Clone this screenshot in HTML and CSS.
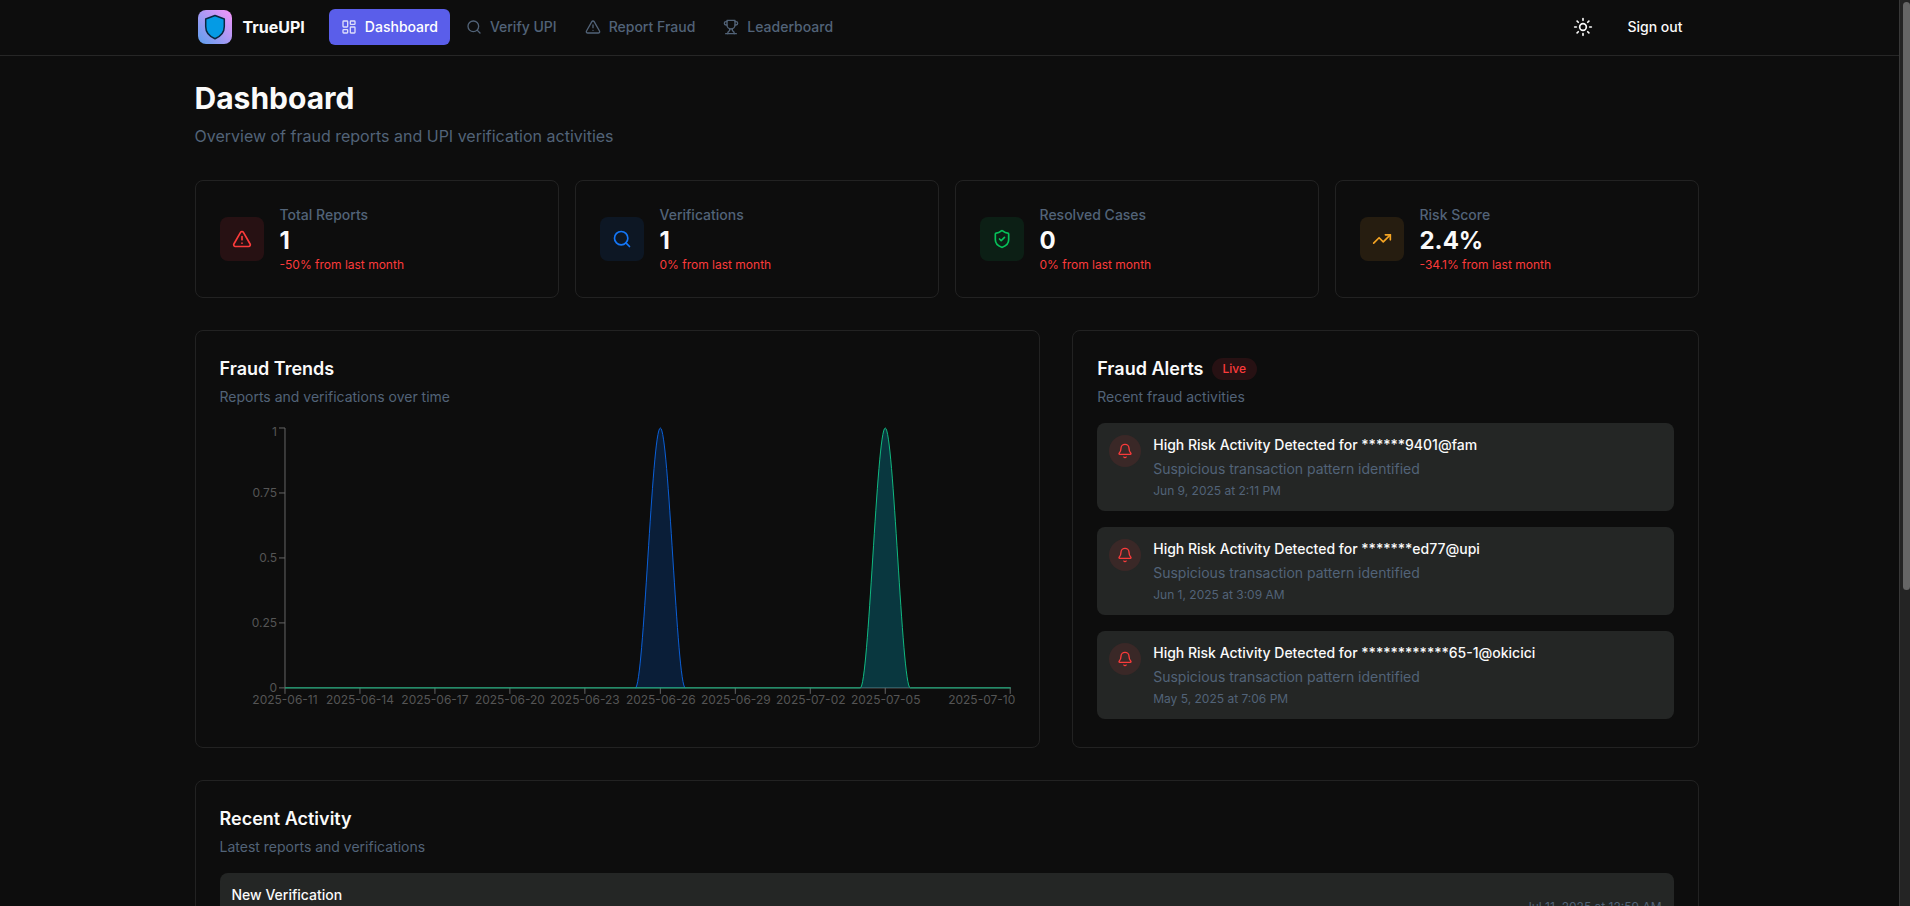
FILE: index.html
```html
<!DOCTYPE html>
<html lang="en">

<head>
    <meta charset="utf-8">
    <meta name="viewport" content="width=device-width, initial-scale=1">
    <title>TrueUPI - Dashboard</title>
    <link rel="stylesheet" href="styles.css">
</head>

<body>
    <!-- shared icons -->
    <svg class="sprite" aria-hidden="true">
        <symbol id="icon-search" viewBox="0 0 24 24">
            <circle cx="11" cy="11" r="8" />
            <path d="m21 21-4.3-4.3" />
        </symbol>
        <symbol id="icon-alert" viewBox="0 0 24 24">
            <path d="m21.73 18-8-14a2 2 0 0 0-3.48 0l-8 14A2 2 0 0 0 4 21h16a2 2 0 0 0 1.73-3" />
            <path d="M12 9v4" />
            <path d="M12 17h.01" />
        </symbol>
        <symbol id="icon-bell" viewBox="0 0 24 24">
            <path d="M10.268 21a2 2 0 0 0 3.464 0" />
            <path d="M3.262 15.326A1 1 0 0 0 4 17h16a1 1 0 0 0 .74-1.673C19.41 13.956 18 12.499 18 8A6 6 0 0 0 6 8c0 4.499-1.411 5.956-2.738 7.326" />
        </symbol>
    </svg>

    <div class="page">
        <header class="header">
            <div class="container header-inner">
                <a href="#" class="brand">
                    <svg class="logo" viewBox="0 0 34 34" aria-hidden="true">
                        <defs>
                            <linearGradient id="logo-bg" x1="0" y1="1" x2="1" y2="0">
                                <stop offset="0" stop-color="#5b9fee" />
                                <stop offset="1" stop-color="#f794fa" />
                            </linearGradient>
                        </defs>
                        <rect width="34" height="34" rx="8" fill="url(#logo-bg)" />
                        <path d="M17 5.5 L26.3 9 V16.5 C26.3 22 22.5 26.5 17 28.7 C11.5 26.5 7.7 22 7.7 16.5 V9 Z" fill="#049be5" stroke="#0b2740" stroke-width="1.5" stroke-linejoin="round" />
                    </svg>
                    TrueUPI
                </a>
                <nav class="nav">
                    <a href="#" class="nav-link active">
                        <svg class="icon" viewBox="0 0 24 24">
                            <rect width="7" height="9" x="3" y="3" rx="1" />
                            <rect width="7" height="5" x="14" y="3" rx="1" />
                            <rect width="7" height="9" x="14" y="12" rx="1" />
                            <rect width="7" height="5" x="3" y="16" rx="1" />
                        </svg>
                        Dashboard
                    </a>
                    <a href="#" class="nav-link">
                        <svg class="icon"><use href="#icon-search" /></svg>
                        Verify UPI
                    </a>
                    <a href="#" class="nav-link">
                        <svg class="icon"><use href="#icon-alert" /></svg>
                        Report Fraud
                    </a>
                    <a href="#" class="nav-link">
                        <svg class="icon" viewBox="0 0 24 24">
                            <path d="M6 9H4.5a2.5 2.5 0 0 1 0-5H6" />
                            <path d="M18 9h1.5a2.5 2.5 0 0 0 0-5H18" />
                            <path d="M4 22h16" />
                            <path d="M10 14.66V17c0 .55-.47.98-.97 1.21C7.85 18.75 7 20.24 7 22" />
                            <path d="M14 14.66V17c0 .55.47.98.97 1.21C16.15 18.75 17 20.24 17 22" />
                            <path d="M18 2H6v7a6 6 0 0 0 12 0V2Z" />
                        </svg>
                        Leaderboard
                    </a>
                </nav>
                <div class="actions">
                    <button type="button" class="btn btn-icon" aria-label="Toggle theme">
                        <svg class="icon icon-md" viewBox="0 0 24 24">
                            <circle cx="12" cy="12" r="4" />
                            <path d="M12 2v2" />
                            <path d="M12 20v2" />
                            <path d="m4.93 4.93 1.41 1.41" />
                            <path d="m17.66 17.66 1.41 1.41" />
                            <path d="M2 12h2" />
                            <path d="M20 12h2" />
                            <path d="m6.34 17.66-1.41 1.41" />
                            <path d="m19.07 4.93-1.41 1.41" />
                        </svg>
                    </button>
                    <button type="button" class="btn">Sign out</button>
                </div>
            </div>
        </header>

        <main class="container main">
            <h1>Dashboard</h1>
            <p class="lead">Overview of fraud reports and UPI verification activities</p>

            <section class="stats">
                <div class="card stat">
                    <div class="stat-icon red">
                        <svg class="icon icon-md"><use href="#icon-alert" /></svg>
                    </div>
                    <div>
                        <p class="stat-label">Total Reports</p>
                        <p class="stat-value">1</p>
                        <p class="stat-change">-50% from last month</p>
                    </div>
                </div>
                <div class="card stat">
                    <div class="stat-icon blue">
                        <svg class="icon icon-md"><use href="#icon-search" /></svg>
                    </div>
                    <div>
                        <p class="stat-label">Verifications</p>
                        <p class="stat-value">1</p>
                        <p class="stat-change">0% from last month</p>
                    </div>
                </div>
                <div class="card stat">
                    <div class="stat-icon green">
                        <svg class="icon icon-md" viewBox="0 0 24 24">
                            <path d="M20 13c0 5-3.5 7.5-7.66 8.95a1 1 0 0 1-.67-.01C7.5 20.5 4 18 4 13V6a1 1 0 0 1 1-1c2 0 4.5-1.2 6.24-2.72a1.17 1.17 0 0 1 1.52 0C14.51 3.81 17 5 19 5a1 1 0 0 1 1 1z" />
                            <path d="m9 12 2 2 4-4" />
                        </svg>
                    </div>
                    <div>
                        <p class="stat-label">Resolved Cases</p>
                        <p class="stat-value">0</p>
                        <p class="stat-change">0% from last month</p>
                    </div>
                </div>
                <div class="card stat">
                    <div class="stat-icon amber">
                        <svg class="icon icon-md" viewBox="0 0 24 24">
                            <path d="M22 7 13.5 15.5l-5-5L2 17" />
                            <path d="M16 7h6v6" />
                        </svg>
                    </div>
                    <div>
                        <p class="stat-label">Risk Score</p>
                        <p class="stat-value">2.4%</p>
                        <p class="stat-change">-34.1% from last month</p>
                    </div>
                </div>
            </section>

            <div class="panels">
                <section class="card trends">
                    <h2>Fraud Trends</h2>
                    <p class="card-sub">Reports and verifications over time</p>
                    <svg class="chart" viewBox="0 0 796 300" role="img" aria-label="Reports and verifications over time">
                        <!-- axes -->
                        <g class="axis">
                            <path d="M65 5V265M65 265H791" />
                            <path d="M59 5h6M59 70h6M59 135h6M59 200h6M59 265h6" />
                            <path d="M65 265v6M140 265v6M215 265v6M290 265v6M365 265v6M440.5 265v6M515.5 265v6M590.5 265v6M665.5 265v6M790.5 265v6" />
                        </g>
                        <g class="labels labels-y">
                            <text x="57" y="13">1</text>
                            <text x="57" y="74">0.75</text>
                            <text x="57" y="139">0.5</text>
                            <text x="57" y="204">0.25</text>
                            <text x="57" y="269">0</text>
                        </g>
                        <g class="labels labels-x">
                            <text x="65" y="281">2025-06-11</text>
                            <text x="140" y="281">2025-06-14</text>
                            <text x="215" y="281">2025-06-17</text>
                            <text x="290" y="281">2025-06-20</text>
                            <text x="365" y="281">2025-06-23</text>
                            <text x="441" y="281">2025-06-26</text>
                            <text x="516" y="281">2025-06-29</text>
                            <text x="591" y="281">2025-07-02</text>
                            <text x="666" y="281">2025-07-05</text>
                            <text x="762" y="281">2025-07-10</text>
                        </g>
                        <!-- reports, then verifications -->
                        <path class="reports" d="M415.5 265C424 265 432 5 440.5 5S457 265 465.5 265" />
                        <path class="verifications" d="M65 265H640.5C649 265 657 5 665.5 5S682 265 690.5 265H791" />
                    </svg>
                </section>

                <section class="card alerts">
                    <div class="card-head">
                        <h2>Fraud Alerts</h2>
                        <span class="badge">Live</span>
                    </div>
                    <p class="card-sub">Recent fraud activities</p>
                    <ul class="list">
                        <li class="alert">
                            <span class="alert-icon"><svg class="icon"><use href="#icon-bell" /></svg></span>
                            <div>
                                <p class="item-title">High Risk Activity Detected for ******9401@fam</p>
                                <p class="item-text">Suspicious transaction pattern identified</p>
                                <p class="item-date">Jun 9, 2025 at 2:11 PM</p>
                            </div>
                        </li>
                        <li class="alert">
                            <span class="alert-icon"><svg class="icon"><use href="#icon-bell" /></svg></span>
                            <div>
                                <p class="item-title">High Risk Activity Detected for *******ed77@upi</p>
                                <p class="item-text">Suspicious transaction pattern identified</p>
                                <p class="item-date">Jun 1, 2025 at 3:09 AM</p>
                            </div>
                        </li>
                        <li class="alert">
                            <span class="alert-icon"><svg class="icon"><use href="#icon-bell" /></svg></span>
                            <div>
                                <p class="item-title">High Risk Activity Detected for ************65-1@okicici</p>
                                <p class="item-text">Suspicious transaction pattern identified</p>
                                <p class="item-date">May 5, 2025 at 7:06 PM</p>
                            </div>
                        </li>
                    </ul>
                </section>
            </div>

            <section class="card">
                <h2>Recent Activity</h2>
                <p class="card-sub">Latest reports and verifications</p>
                <ul class="list">
                    <li class="activity">
                        <p class="item-title">New Verification</p>
                        <time class="activity-date" datetime="2025-07-11T00:59">Jul 11, 2025 at 12:59 AM</time>
                    </li>
                </ul>
            </section>
        </main>
    </div>

    <div class="scrollbar" aria-hidden="true">
        <div class="scrollbar-thumb"></div>
    </div>
</body>

</html>
```
FILE: styles.css
```css
:root {
    --bg: #0d0d0d;
    --border: #222222;
    --text: #fafafa;
    --muted: #526378;
    --item: #242625;
    --primary: #5a5eea;
    --red: #fb3b3b;
}

* {
    box-sizing: border-box;
}

body {
    display: flex;
    height: 100vh;
    margin: 0;
    overflow: hidden;
    background: var(--bg);
    color: var(--text);
    font-family: Inter, "Liberation Sans", sans-serif;
    font-size: 14px;
    line-height: 20px;
}

h1,
h2,
p,
ul {
    margin: 0;
    padding: 0;
}

ul {
    list-style: none;
}

a {
    color: inherit;
    text-decoration: none;
}

.sprite {
    display: none;
}

.page {
    flex: 1;
    min-width: 0;
    overflow: hidden;
}

.container {
    max-width: 1542px;
    margin: 0 auto;
    padding: 0 22px 0 16px;
}

.icon {
    flex: none;
    width: 16px;
    height: 16px;
    fill: none;
    stroke: currentColor;
    stroke-width: 2;
    stroke-linecap: round;
    stroke-linejoin: round;
}

.icon-md {
    width: 20px;
    height: 20px;
}

/* Header */
.header {
    padding-bottom: 1px;
    border-bottom: 1px solid #262626;
}

.header-inner {
    display: flex;
    align-items: center;
    height: 54px;
}

.brand {
    display: flex;
    align-items: center;
    gap: 11px;
    padding: 0 24px 0 3px;
    font-size: 16px;
    font-weight: 700;
    line-height: 24px;
}

.logo {
    width: 34px;
    height: 34px;
}

.nav {
    display: flex;
    gap: 4px;
}

.nav-link {
    display: flex;
    align-items: center;
    gap: 8px;
    height: 36px;
    padding: 0 12px;
    border-radius: 6px;
    color: var(--muted);
    font-weight: 500;
}

.nav-link.active {
    background: var(--primary);
    color: #fff;
}

.nav-link.active .icon {
    opacity: 0.8;
}

.actions {
    display: flex;
    align-items: center;
    gap: 8px;
    margin-left: auto;
}

.btn {
    height: 36px;
    padding: 0 16px;
    border: none;
    border-radius: 6px;
    background: none;
    color: var(--text);
    font: inherit;
    font-weight: 500;
    cursor: pointer;
}

.btn-icon {
    display: flex;
    align-items: center;
    justify-content: center;
    width: 40px;
    padding: 0;
}

.btn:hover {
    background: var(--item);
}

/* Content */
.main {
    padding-top: 24px;
}

h1 {
    font-size: 30px;
    font-weight: 700;
    line-height: 36px;
}

h2 {
    font-size: 18px;
    font-weight: 600;
    line-height: 28px;
}

.lead {
    margin: 8px 0 32px;
    color: var(--muted);
    font-size: 16px;
    line-height: 24px;
}

.card {
    padding: 24px;
    border: 1px solid var(--border);
    border-radius: 8px;
}

.card-head {
    display: flex;
    align-items: center;
    gap: 8px;
}

.card-sub {
    margin: 4px 0 16px;
    color: var(--muted);
}

.badge {
    padding: 3px 11px;
    border-radius: 11px;
    background: #271113;
    color: var(--red);
    font-size: 12px;
    font-weight: 500;
    line-height: 16px;
}

/* Stat cards */
.stats {
    display: grid;
    grid-template-columns: repeat(4, 1fr);
    gap: 16px;
    margin-bottom: 32px;
}

.stat {
    display: flex;
    align-items: center;
    gap: 16px;
}

.stat-icon {
    display: flex;
    padding: 12px;
    border-radius: 8px;
}

.stat-icon.red {
    background: #271113;
    color: var(--red);
}

.stat-icon.blue {
    background: #0d1724;
    color: #1477f8;
}

.stat-icon.green {
    background: #0c1f15;
    color: #06c159;
}

.stat-icon.amber {
    background: #261d10;
    color: #f5a524;
}

.stat-label {
    color: var(--muted);
    font-weight: 500;
}

.stat-value {
    font-size: 24px;
    font-weight: 700;
    line-height: 32px;
}

.stat-change {
    color: var(--red);
    font-size: 12px;
    line-height: 16px;
}

/* Chart and alerts */
.panels {
    display: grid;
    grid-template-columns: repeat(7, 1fr);
    gap: 32px;
    margin-bottom: 32px;
}

.trends {
    grid-column: span 4;
}

.alerts {
    grid-column: span 3;
}

.chart {
    display: block;
    width: 100%;
    height: auto;
}

.axis {
    fill: none;
    stroke: #666;
}

.labels {
    fill: #555;
    font-size: 12px;
}

.labels-y {
    text-anchor: end;
}

.labels-x {
    text-anchor: middle;
}

.reports {
    fill: rgba(0, 98, 230, 0.2);
    stroke: #0a5fd8;
}

.verifications {
    fill: rgba(0, 152, 180, 0.3);
    stroke: #10b981;
}

.list {
    display: flex;
    flex-direction: column;
    gap: 16px;
}

.alert {
    display: flex;
    gap: 12px;
    padding: 12px;
    border-radius: 8px;
    background: var(--item);
}

.alert-icon {
    display: flex;
    align-items: center;
    justify-content: center;
    flex: none;
    width: 32px;
    height: 32px;
    border-radius: 50%;
    background: #3a2827;
    color: var(--red);
}

.item-title {
    font-weight: 500;
}

.item-text {
    margin: 4px 0;
    color: var(--muted);
}

.item-date,
.activity-date {
    color: var(--muted);
    font-size: 12px;
    line-height: 16px;
}

.activity {
    display: flex;
    justify-content: space-between;
    min-height: 68px;
    padding: 12px;
    border-radius: 8px;
    background: var(--item);
}

.activity-date {
    align-self: center;
}

/* Scrollbar */
.scrollbar {
    flex: none;
    width: 11px;
    padding: 2px 0 0 3px;
    border-left: 1px solid #383838;
    background: #242424;
}

.scrollbar-thumb {
    height: 65%;
    border-radius: 4px;
    background: #666;
}
```
